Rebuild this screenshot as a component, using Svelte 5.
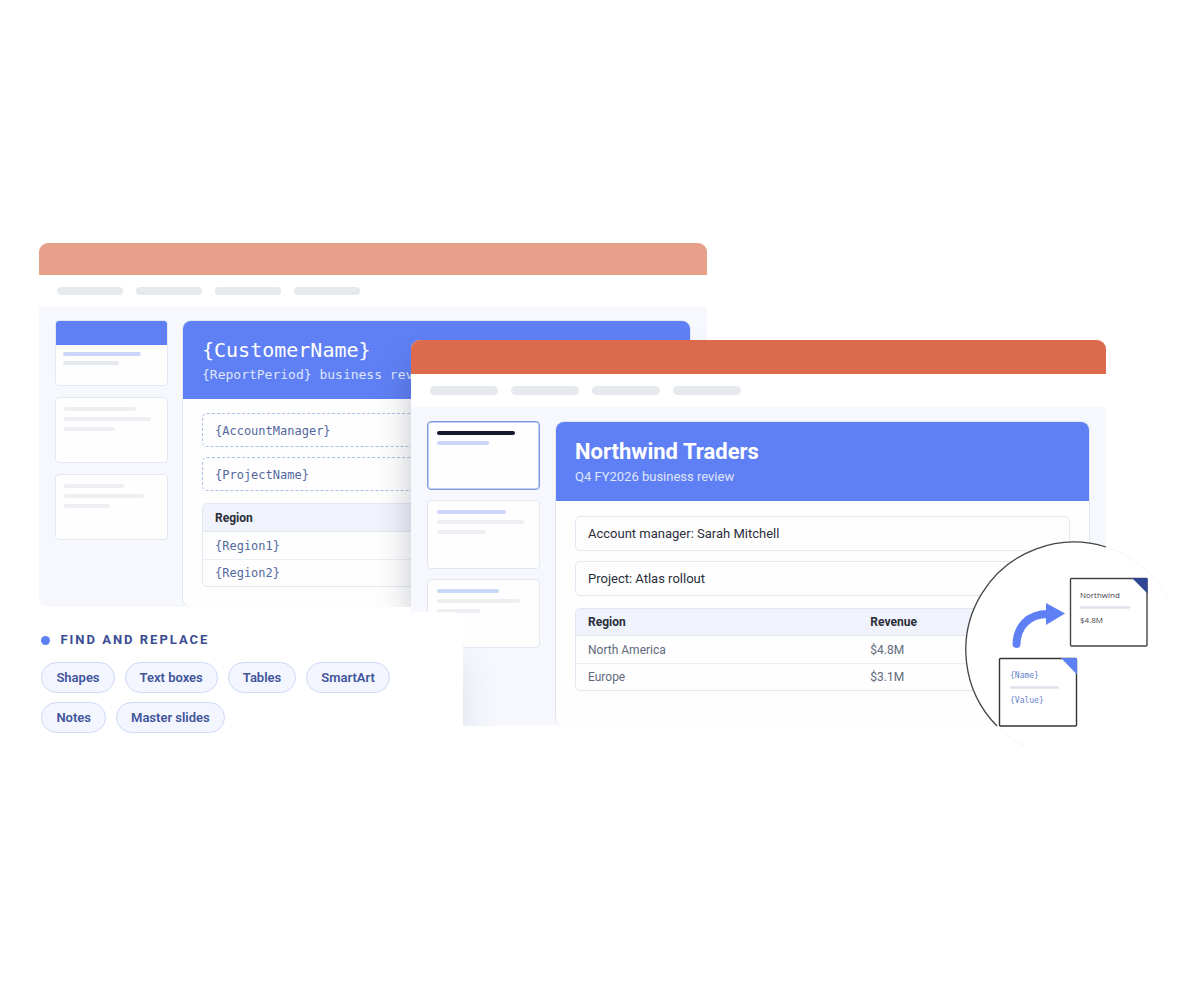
<script>
    const pills = [1, 2, 3, 4]

    const templateThumbs = [
        { lines: [['tint', 78], ['grey', 56]], cover: true },
        { lines: [['pale', 72], ['pale', 87], ['pale', 51]] },
        { lines: [['pale', 60], ['pale', 81], ['pale', 46]] },
    ]

    const resultThumbs = [
        { lines: [['dark', 78], ['tint', 52]], active: true },
        { lines: [['tint', 69], ['pale', 87], ['pale', 49]] },
        { lines: [['tint', 62], ['pale', 83], ['pale', 43]] },
    ]

    const targets = ['Shapes', 'Text boxes', 'Tables', 'SmartArt', 'Notes', 'Master slides']
</script>

{#snippet toolbar()}
    <div class="titlebar"></div>
    <div class="toolbar">
        {#each pills as pill}
            <span class="pill"></span>
        {/each}
    </div>
{/snippet}

{#snippet thumbnails(thumbs)}
    <div class="thumbs">
        {#each thumbs as thumb}
            <div class="thumb" class:active={thumb.active} class:cover={thumb.cover}>
                {#each thumb.lines as [tone, width]}
                    <span class="line {tone}" style="width: {width}px"></span>
                {/each}
            </div>
        {/each}
    </div>
{/snippet}

<main class="page">
    <div class="scene">
        <section class="window template">
            {@render toolbar()}
            <div class="workspace">
                {@render thumbnails(templateThumbs)}
                <article class="slide">
                    <header>
                        <h2>{'{CustomerName}'}</h2>
                        <p>{'{ReportPeriod}'} business review</p>
                    </header>
                    <div class="content">
                        <p class="field">{'{AccountManager}'}</p>
                        <p class="field">{'{ProjectName}'}</p>
                        <table>
                            <thead>
                                <tr><th>Region</th></tr>
                            </thead>
                            <tbody>
                                <tr><td>{'{Region1}'}</td></tr>
                                <tr><td>{'{Region2}'}</td></tr>
                            </tbody>
                        </table>
                    </div>
                </article>
            </div>
        </section>

        <section class="window result">
            {@render toolbar()}
            <div class="workspace">
                {@render thumbnails(resultThumbs)}
                <article class="slide">
                    <header>
                        <h2>Northwind Traders</h2>
                        <p>Q4 FY2026 business review</p>
                    </header>
                    <div class="content">
                        <p class="field">Account manager: Sarah Mitchell</p>
                        <p class="field">Project: Atlas rollout</p>
                        <table>
                            <thead>
                                <tr><th>Region</th><th>Revenue</th></tr>
                            </thead>
                            <tbody>
                                <tr><td>North America</td><td>$4.8M</td></tr>
                                <tr><td>Europe</td><td>$3.1M</td></tr>
                            </tbody>
                        </table>
                    </div>
                </article>
            </div>
        </section>

        <section class="panel">
            <h3>Find and replace</h3>
            <ul>
                {#each targets as target}
                    <li>{target}</li>
                {/each}
            </ul>
        </section>

        <svg class="badge" viewBox="0 0 240 230" width="240" height="230">
            <circle cx="133.5" cy="120" r="108" fill="#fff" />
            <path d="M166 17A108 108 0 0 1 228 68M57 196A108 108 0 0 0 84 216" fill="none" stroke="#ccc" stroke-width=".6" stroke-dasharray="1 2" />
            <path d="M166 17A108 108 0 0 0 57 196" fill="none" stroke="#444446" stroke-width="1.3" />

            <path d="M76.500 114C77 97 88 84 108 84" fill="none" stroke="#5f80f4" stroke-width="8" stroke-linecap="round" />
            <path d="M106 73L125 83.500L106 95Z" fill="#5f80f4" />

            <rect x="130.500" y="48.500" width="76.500" height="67.500" rx="1" fill="#fff" stroke="#454547" stroke-width="1.400" />
            <path d="M192 48H207.500V63.500Z" fill="#304796" />
            <text x="140" y="68">Northwind</text>
            <path d="M141 77.500H189" stroke="#dfe2ea" stroke-width="2.400" stroke-linecap="round" />
            <text x="140" y="93">$4.8M</text>

            <rect x="59.500" y="128.500" width="77" height="67.500" rx="1" fill="#fff" stroke="#353537" stroke-width="1.400" />
            <path d="M121 128H137V144.500Z" fill="#5f80f4" />
            <text class="token" x="70" y="148">{'{Name}'}</text>
            <path d="M71 157.500H118" stroke="#dfe2ea" stroke-width="2.400" stroke-linecap="round" />
            <text class="token" x="70" y="173">{'{Value}'}</text>
        </svg>
    </div>
</main>

<style>
    :global(body) {
        background: #fff;
    }

    .page {
        --blue: #5f80f4;
        --border: #e2e7f1;
        align-items: center;
        color: #2b2e3a;
        display: flex;
        font-family: Roboto, "Open Sans", sans-serif;
        font-size: 12px;
        min-height: 100vh;
        overflow: hidden;
    }

    .page * {
        box-sizing: border-box;
    }

    h2, h3, p, ul {
        margin: 0;
        padding: 0;
    }

    .scene {
        flex: 1;
        height: 514px;
        position: relative;
    }

    .window {
        background: #f6f8fe;
        display: flex;
        flex-direction: column;
        overflow: hidden;
        position: absolute;
    }

    .template {
        border-radius: 9px 9px 0 9px;
        height: 364px;
        left: 3.25%;
        top: 0;
        width: 55.7%;
    }

    .result {
        border-radius: 9px 9px 0 0;
        height: 386px;
        left: 34.25%;
        top: 97px;
        width: 57.9%;
    }

    /* shadows cast by the surface in front, kept inside the window */
    .template::after,
    .result::after {
        content: '';
        pointer-events: none;
        position: absolute;
    }

    .template::after {
        bottom: 0;
        box-shadow: 0 12px 32px rgba(30, 40, 60, .26);
        left: 55.7%;
        top: 112px;
        width: 100%;
    }

    .result::after {
        box-shadow: 0 12px 32px rgba(60, 60, 100, .12);
        height: 110px;
        right: 92.5%;
        top: 310px;
        width: 50%;
    }

    .titlebar {
        background: #e7a18a;
        flex: 0 0 32px;
    }

    .result .titlebar {
        background: #dc6b4e;
        flex-basis: 34px;
    }

    .toolbar {
        align-items: center;
        background: #fff;
        display: flex;
        flex: 0 0 31px;
        gap: 13px;
        padding: 0 18px;
    }

    .result .toolbar {
        flex-basis: 33px;
        padding: 0 19px;
    }

    .pill {
        background: #e6e9ee;
        border-radius: 4px;
        height: 8px;
        width: 66px;
    }

    .result .pill {
        border-radius: 5px;
        height: 9px;
        width: 68px;
    }

    .workspace {
        align-items: stretch;
        display: flex;
        flex: 1;
        gap: 14px;
        min-height: 0;
        padding: 14px 16px 0;
    }

    .result .workspace {
        gap: 15px;
    }

    .thumbs {
        display: flex;
        flex: 0 0 113px;
        flex-direction: column;
        gap: 11px;
    }

    .result .thumbs {
        gap: 10px;
    }

    .thumb {
        background: #fefefe;
        border: 1px solid var(--border);
        border-radius: 4px;
        display: flex;
        flex-direction: column;
        gap: 6px;
        height: 66px;
        padding: 9px 8px;
    }

    .result .thumb {
        height: 69px;
        padding: 9px;
    }

    .thumb.cover {
        gap: 5px;
        padding: 0 7px;
    }

    .thumb.cover::before {
        background: var(--blue);
        border-radius: 3px 3px 0 0;
        content: '';
        flex: 0 0 24px;
        margin: 0 -7px 2px;
    }

    .thumb.active {
        border-color: #7f97dc;
        box-shadow: inset 0 0 0 1px #c3cff0;
    }

    .line {
        border-radius: 2px;
        flex: 0 0 4px;
        max-width: 100%;
    }

    .tint { background: #cbd6fb; }
    .grey { background: #e5e8ee; }
    .pale { background: #eeeff2; }
    .dark { background: #171a2c; }

    .slide {
        background: #fefefe;
        border: 1px solid var(--border);
        border-bottom: 0;
        border-radius: 9px 9px 0 9px;
        flex: 1;
        min-width: 0;
        overflow: hidden;
    }

    .slide header {
        background: var(--blue);
        color: #fff;
        height: 78px;
        padding: 14px 19px 0;
        white-space: nowrap;
    }

    .result header {
        height: 79px;
        padding-top: 15px;
    }

    .slide header p {
        color: #dfe6fd;
        font-size: 13px;
        line-height: 20px;
    }

    .slide h2 {
        font-size: 20px;
        font-weight: 400;
        line-height: 30px;
    }

    .result h2 {
        font-size: 22px;
        font-weight: 700;
    }

    .template header,
    .template header p,
    .template .field,
    .template td {
        font-family: "DejaVu Sans Mono", "Liberation Mono", monospace;
    }

    .template .field,
    .template td {
        color: #5468a0;
        font-size: 12px;
    }

    .content {
        padding: 14px 19px 0;
    }

    .result .content {
        padding-top: 15px;
    }

    .field {
        border: 1px solid var(--border);
        border-radius: 5px;
        font-size: 13px;
        line-height: 33px;
        margin-bottom: 10px;
        padding: 0 12px;
    }

    .template .field {
        border: 1px dashed #aac0e6;
        line-height: 30px;
        padding-top: 2px;
    }

    table {
        border: 1px solid var(--border);
        border-radius: 5px;
        border-spacing: 0;
        margin-top: 12px;
        overflow: hidden;
        table-layout: fixed;
        width: 100%;
    }

    th, td {
        height: 27px;
        padding: 0 12px;
        text-align: left;
    }

    th {
        background: #f0f3fb;
        border-bottom: 1px solid var(--border);
        font-size: 12px;
        font-weight: 700;
    }

    .template th {
        height: 28px;
    }

    th:first-child {
        width: 57.3%;
    }

    td {
        color: #626a7d;
        font-size: 12px;
    }

    tr + tr td {
        border-top: 1px solid #eceff5;
    }

    .panel {
        background: #fff;
        border-radius: 10px;
        height: 141px;
        left: 1.7%;
        padding: 18px 20px 18px 21px;
        position: absolute;
        top: 369px;
        width: 36.9%;
    }

    h3 {
        align-items: center;
        color: #3a4c91;
        display: flex;
        font-size: 13px;
        gap: 10px;
        letter-spacing: 2px;
        line-height: 20px;
        text-transform: uppercase;
    }

    h3::before {
        background: var(--blue);
        border-radius: 50%;
        content: '';
        height: 9px;
        width: 9px;
    }

    ul {
        display: flex;
        flex-wrap: wrap;
        gap: 9px 10px;
        list-style: none;
        margin-top: 12px;
    }

    li {
        background: #f3f6ff;
        border: 1px solid #cfd9f6;
        border-radius: 16px;
        color: #41549b;
        font-size: 13px;
        font-weight: 600;
        line-height: 29px;
        padding: 0 14px;
    }

    .badge {
        left: 78.33%;
        position: absolute;
        top: 287px;
    }

    .badge text {
        fill: #414450;
        font-family: "Open Sans", sans-serif;
        font-size: 8px;
    }

    .badge .token {
        fill: #6684cc;
        font-family: "DejaVu Sans Mono", monospace;
    }
</style>
